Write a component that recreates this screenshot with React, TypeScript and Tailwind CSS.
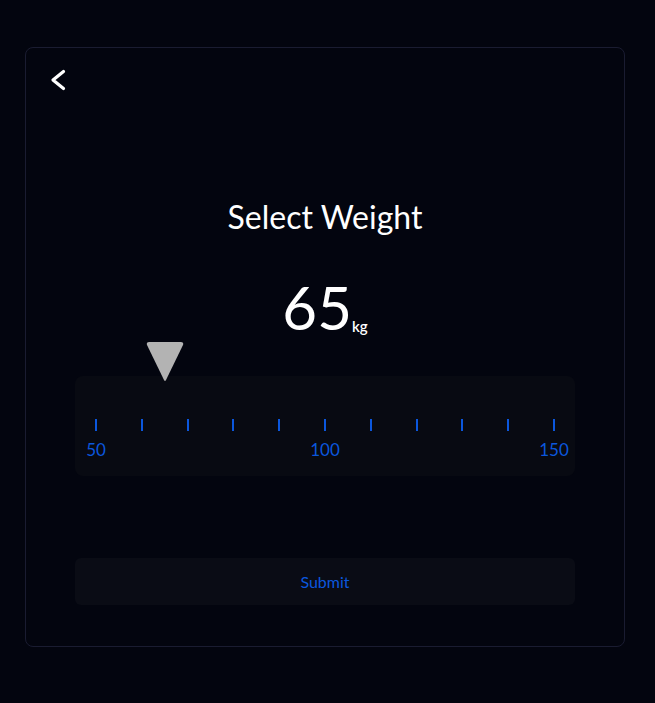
import React from "react";

const WeightPicker = () => {
  const min = 50;
  const max = 150;
  const step = 10;
  const weight = 65;
  const ticks = Array.from({ length: (max - min) / step + 1 }, (_, i) => min + i * step);
  // ticks run from 21px to 479px inside the 500px ruler
  const pointerLeft = 21 + ((weight - min) / (max - min)) * 458;

  return (
    <div className="w-[600px] h-[600px] border border-[#1a1c31] rounded-lg px-6 pt-5 flex flex-col">
      {/* Back */}
      <button className="self-start w-6 h-6 text-white">
        <svg viewBox="0 0 24 24" width="24" height="24" fill="none" stroke="currentColor" strokeWidth="3.2" strokeLinecap="round" strokeLinejoin="round">
          <path d="M13.5 3.5 L3 12 L13.5 20.5" />
        </svg>
      </button>

      <h1 className="mt-[107px] text-center text-white text-[32px] leading-9">Select Weight</h1>

      <div className="mt-[42px] flex justify-center items-baseline text-white">
        <span className="text-6xl leading-none">{weight}</span>
        <span className="text-[15px] font-semibold relative top-0.5">kg</span>
      </div>

      {/* Ruler */}
      <div className="relative mt-[39px] mx-[25px] h-[100px] rounded-lg bg-[#080a12] px-5 pt-[43px]">
        <svg
          className="absolute top-[-34px]"
          style={{ left: pointerLeft - 19 }}
          width="38"
          height="39"
          viewBox="0 0 38 39"
        >
          <path d="M3 0 H35 Q38 0 37 3 L20 38 Q19 40 18 38 L1 3 Q0 0 3 0 Z" fill="#b3b3b3" />
        </svg>
        <div className="flex justify-between">
          {ticks.map((t) => (
            <div key={t} className="w-[2px] flex flex-col items-center">
              <div className="w-[2px] h-3 bg-[#0b57dd]" />
              {(t === min || t === max || t === 100) && (
                <span className="mt-1.5 text-[17px] text-[#0b57dd] whitespace-nowrap">{t}</span>
              )}
            </div>
          ))}
        </div>
      </div>

      <button className="mt-[82px] mx-[25px] h-[47px] rounded-md bg-[#0a0c15] text-[#0b57dd] text-base">
        Submit
      </button>
    </div>
  );
};

export default function App() {
  return (
    <div className="min-h-screen bg-[#03050f] pl-[25px] pt-[47px] font-['Lato',sans-serif]">
      <WeightPicker />
    </div>
  );
}
